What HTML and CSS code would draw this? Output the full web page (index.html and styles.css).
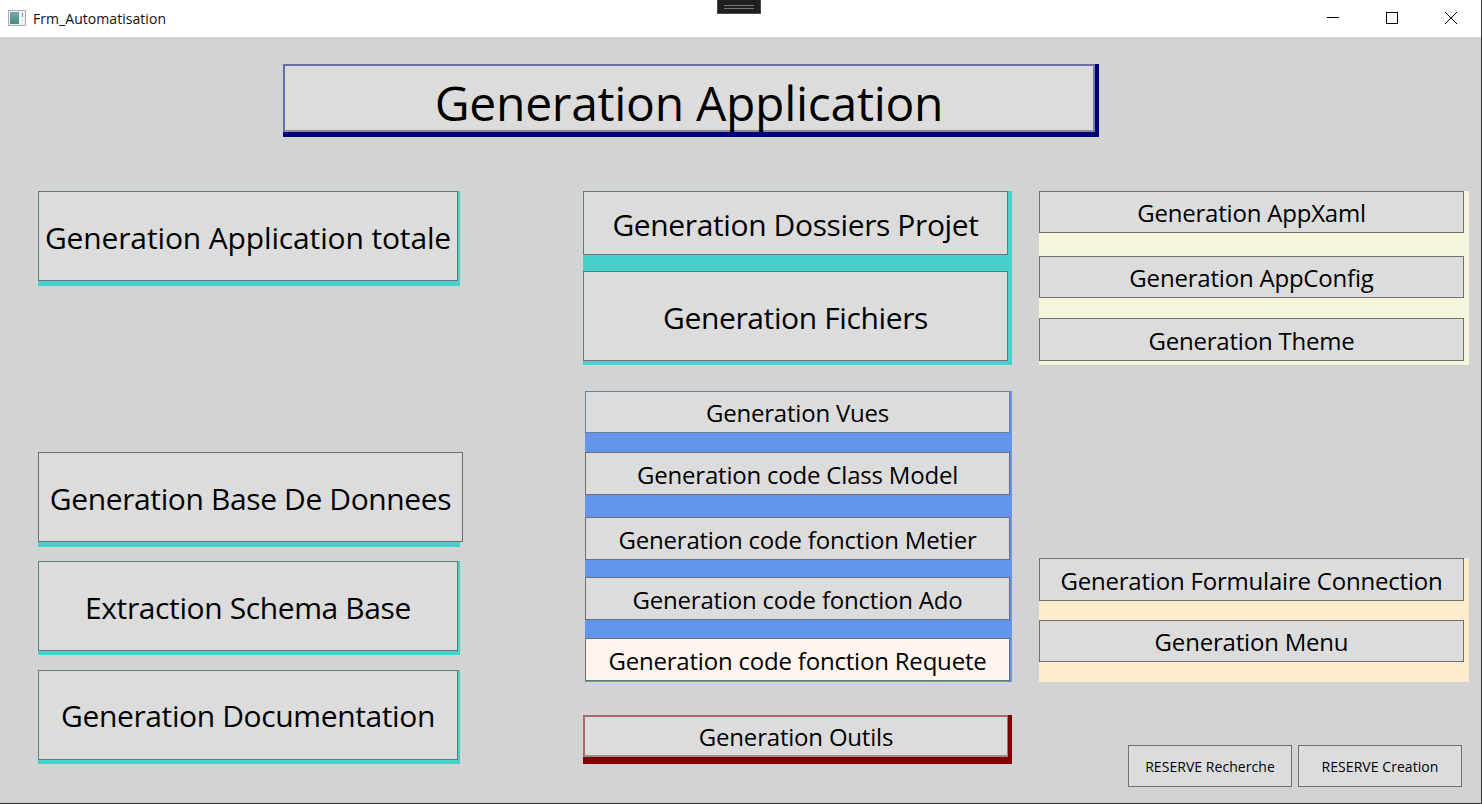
FILE: index.html
```html
<!DOCTYPE html>
<html lang="fr">
<head>
<meta charset="utf-8">
<title>Frm_Automatisation</title>
<link rel="stylesheet" href="styles.css">
</head>
<body>
<div class="window">
  <header class="titlebar">
    <svg class="app-icon" width="18" height="16" viewBox="0 0 18 16">
      <defs>
        <linearGradient id="pane" x1="0" y1="0" x2="0" y2="1">
          <stop offset="0" stop-color="#7fa3ad"/>
          <stop offset="1" stop-color="#3f8f78"/>
        </linearGradient>
      </defs>
      <rect x="0.5" y="0.5" width="17" height="15" fill="#eef1f2" stroke="#a9b0b4"/>
      <rect x="2" y="2" width="9" height="12" fill="url(#pane)"/>
      <rect x="14" y="3" width="1" height="4" fill="#6f9a92"/>
    </svg>
    <span class="window-title">Frm_Automatisation</span>
    <div class="window-controls">
      <svg class="ctl" width="46" height="37" viewBox="0 0 46 37"><path d="M17 17.5H29" stroke="#000" fill="none"/></svg>
      <svg class="ctl" width="46" height="37" viewBox="0 0 46 37"><rect x="17.5" y="12.5" width="11" height="11" stroke="#000" fill="none"/></svg>
      <svg class="ctl" width="46" height="37" viewBox="0 0 46 37"><path d="M17 12L29 24M29 12L17 24" stroke="#000" fill="none"/></svg>
    </div>
  </header>
  <div class="snap-handle"><span class="snap-lines"></span></div>

  <main class="client">
    <div class="title-panel">
      <button class="btn btn-title">Generation Application</button>
    </div>

    <div class="columns">
      <section class="col col-left">
        <div class="panel panel-teal panel-left"><button class="btn btn-left btn-total teal-edge fs-30">Generation Application totale</button></div>
        <div class="panel panel-teal panel-left panel-base"><button class="btn btn-left btn-wide plain-edge fs-30">Generation Base De Donnees</button></div>
        <div class="panel panel-teal panel-left panel-schema"><button class="btn btn-left teal-edge fs-30">Extraction Schema Base</button></div>
        <div class="panel panel-teal panel-left panel-doc"><button class="btn btn-left teal-edge fs-30">Generation Documentation</button></div>
      </section>

      <section class="col col-mid">
        <div class="panel panel-teal panel-files">
          <button class="btn btn-mid teal-edge h-64 fs-30">Generation Dossiers Projet</button>
          <button class="btn btn-mid teal-edge h-90 mt-16 fs-30">Generation Fichiers</button>
        </div>
        <div class="panel panel-blue">
          <button class="btn btn-mid blue-edge h-42 fs-25">Generation Vues</button>
          <button class="btn btn-mid plain-edge h-43 mt-19 fs-25">Generation code Class Model</button>
          <button class="btn btn-mid plain-edge h-43 mt-22 fs-25">Generation code fonction Metier</button>
          <button class="btn btn-mid plain-edge h-43 mt-17 fs-25">Generation code fonction Ado</button>
          <button class="btn btn-mid plain-edge btn-light h-43 mt-18 fs-25">Generation code fonction Requete</button>
        </div>
        <div class="panel panel-maroon">
          <button class="btn btn-mid maroon-edge h-42 fs-25">Generation Outils</button>
        </div>
      </section>

      <section class="col col-right">
        <div class="panel panel-beige">
          <button class="btn btn-mid plain-edge h-42 fs-25">Generation AppXaml</button>
          <button class="btn btn-mid plain-edge h-42 mt-23 fs-25">Generation AppConfig</button>
          <button class="btn btn-mid plain-edge h-43 mt-20 fs-25">Generation Theme</button>
        </div>
        <div class="panel panel-almond">
          <button class="btn btn-mid plain-edge h-43 fs-25">Generation Formulaire Connection</button>
          <button class="btn btn-mid plain-edge h-42 mt-19 fs-25">Generation Menu</button>
        </div>
        <div class="reserve-row">
          <button class="btn btn-reserve plain-edge">RESERVE Recherche</button>
          <button class="btn btn-reserve plain-edge">RESERVE Creation</button>
        </div>
      </section>
    </div>
  </main>
</div>
</body>
</html>
```
FILE: styles.css
```css
* { box-sizing: border-box; }
html, body { margin: 0; padding: 0; }
body {
  width: 1482px;
  height: 804px;
  overflow: hidden;
  font-family: "Open Sans", "Noto Sans", "Liberation Sans", sans-serif;
  color: #000;
}
.window {
  position: relative;
  width: 1482px;
  height: 804px;
  display: flex;
  flex-direction: column;
  background: #d3d3d3;
  border-right: 1px solid #3a3a3a;
  border-bottom: 1px solid #2a2a2a;
}
.titlebar {
  height: 37px;
  flex: none;
  background: #fff;
  display: flex;
  align-items: center;
  padding-left: 8px;
}
.app-icon { flex: none; margin-top: -2px; }
.window-title {
  margin-left: 7px;
  font-size: 14px;
  letter-spacing: 0.05px;
  color: #111;
}
.window-controls {
  margin-left: auto;
  display: flex;
  margin-right: 7px;
  gap: 13px;
}
.ctl { display: block; }
.snap-handle {
  position: absolute;
  left: 717px;
  top: 0;
  width: 44px;
  height: 14px;
  background: #1f1f1f;
  border: 1px solid #4a4a4a;
  border-top: 0;
  display: flex;
  align-items: center;
  justify-content: center;
}
.snap-lines {
  width: 30px;
  height: 4px;
  border-top: 1px solid #777;
  border-bottom: 1px solid #777;
}
.client { flex: 1; padding: 27px 0 0 38px; }
.title-panel {
  width: 816px;
  height: 73px;
  margin-left: 245px;
  padding: 0 4px 5px 0;
  background: #000080;
}
.btn {
  display: flex;
  align-items: center;
  justify-content: center;
  padding: 0;
  margin: 0;
  flex: none;
  background: #dcdcdc;
  border: 1px solid var(--edge, #707070);
  font-family: inherit;
  color: #000;
  white-space: nowrap;
}
.btn-title {
  width: 812px;
  height: 68px;
  border-width: 2px;
  border-color: #6c6ca6 #7d7d95 #8a8a9c #6c6ca6;
  font-size: 48px;
  letter-spacing: -0.3px;
  padding-top: 8px;
}
.columns {
  display: grid;
  grid-template-columns: 545px 456px 1fr;
  margin-top: 54px;
}
.col { display: flex; flex-direction: column; align-items: flex-start; }
.panel { display: flex; flex-direction: column; align-items: flex-start; flex: none; }
.panel-teal { background: #48d1cc; }
.panel-left { width: 422px; height: 95px; }
.panel-base { margin-top: 166px; }
.panel-schema { margin-top: 14px; height: 94px; }
.panel-doc { margin-top: 15px; height: 94px; }
.btn-left { width: 420px; height: 90px; }
.btn-wide { width: 425px; }
.btn-mid { width: 425px; }
.btn-light { background: #fff5ee; }
.panel-files { width: 429px; height: 174px; }
.panel-blue {
  width: 427px;
  height: 291px;
  margin-top: 26px;
  margin-left: 2px;
  background: #6495ed;
}
.panel-maroon {
  width: 429px;
  height: 49px;
  margin-top: 33px;
  background: #800000;
}
.panel-beige { width: 430px; height: 174px; background: #f5f5dc; }
.panel-almond { width: 430px; height: 124px; margin-top: 193px; background: #ffebcd; }
.reserve-row { display: flex; gap: 6px; margin-top: 63px; margin-left: 89px; }
.btn-reserve { width: 164px; height: 42px; font-size: 14px; letter-spacing: 0.05px; }
.teal-edge { --edge: #627a7a; }
.blue-edge { --edge: #6b7f9f; }
.maroon-edge { border-width: 2px 1px 2px 2px; border-color: #a86868 #8a8080 #9a9090 #a86868; }
.plain-edge { --edge: #707070; }
.h-42 { height: 42px; }
.h-43 { height: 43px; }
.h-64 { height: 64px; }
.h-90 { height: 90px; }
.mt-16 { margin-top: 16px; }
.mt-17 { margin-top: 17px; }
.mt-18 { margin-top: 18px; }
.mt-19 { margin-top: 19px; }
.mt-20 { margin-top: 20px; }
.mt-22 { margin-top: 22px; }
.mt-23 { margin-top: 23px; }
.fs-30 { font-size: 30px; letter-spacing: -0.38px; padding-top: 2px; }
.fs-25 { font-size: 24px; letter-spacing: -0.2px; padding-top: 2px; }
.h-42.fs-25 { padding-top: 0; }
.panel-doc .btn-left { padding-top: 0; }
.btn-total { letter-spacing: -0.14px; }
```
